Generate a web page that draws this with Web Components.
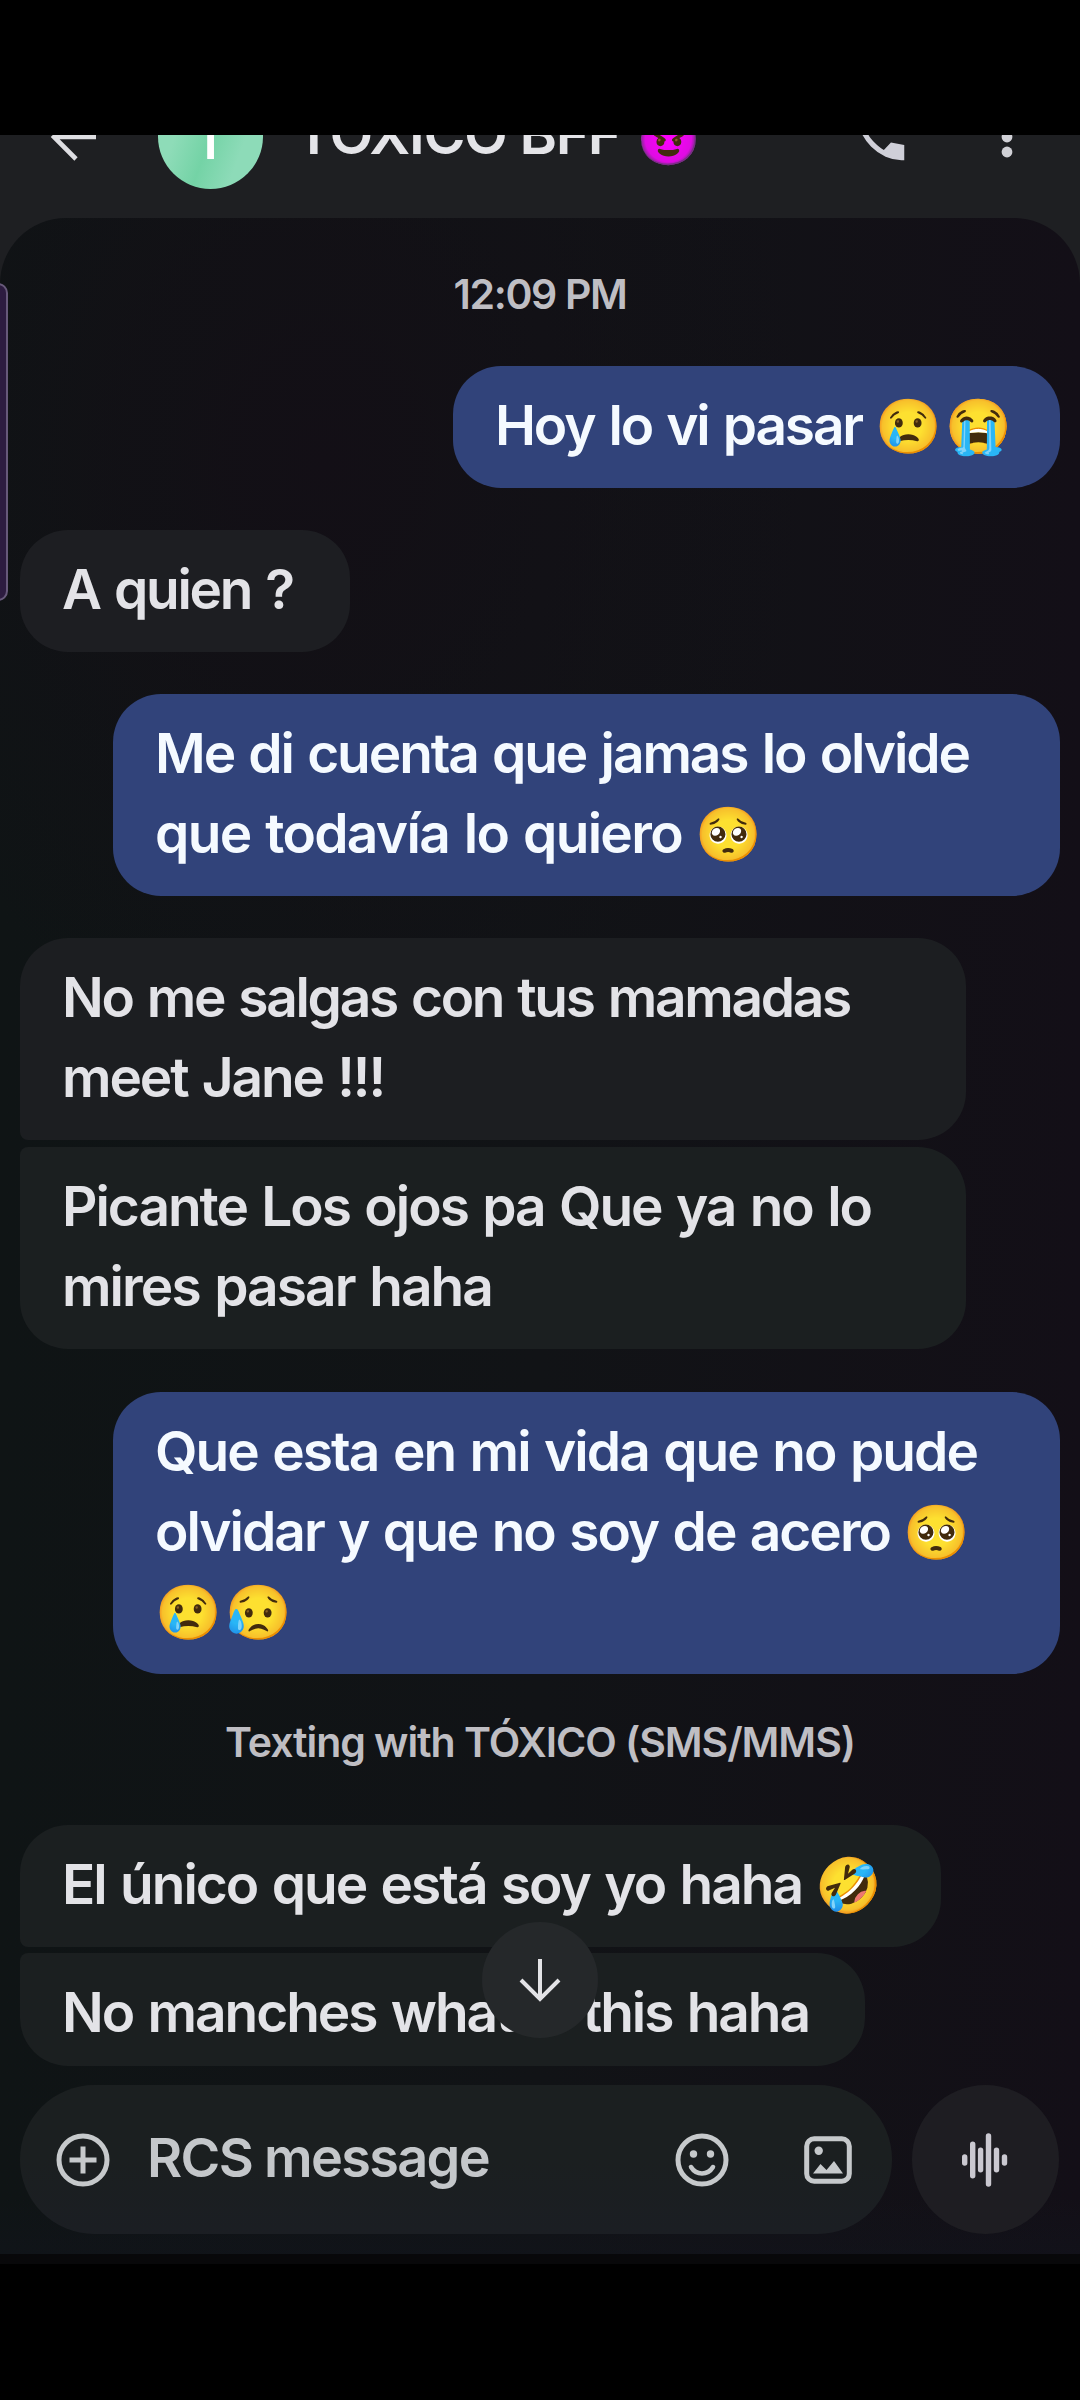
<!DOCTYPE html>
<html lang="es">
<head>
<meta charset="utf-8">
<title>Chat</title>
<style>
html,body{margin:0;background:#000}
body{width:1080px;height:2400px;overflow:hidden;font-family:Inter,"Liberation Sans",sans-serif}
</style>
</head>
<body>
<chat-screen>
  <chat-header slot="header"></chat-header>
  <chat-label style="margin-bottom:42px"><fit-text w="173">12:09 PM</fit-text></chat-label>
  <chat-bubble from="me" style="width:607px;margin-bottom:42px">
    <text-line><fit-text w="367">Hoy lo vi pasar</fit-text><emoji-run>😢😭</emoji-run></text-line>
  </chat-bubble>
  <chat-bubble style="width:330px;margin-bottom:42px">
    <text-line><fit-text w="231">A quien ?</fit-text></text-line>
  </chat-bubble>
  <chat-bubble from="me" style="width:947px;margin-bottom:42px">
    <text-line><fit-text w="814">Me di cuenta que jamas lo olvide</fit-text></text-line>
    <text-line><fit-text w="527">que todavía lo quiero</fit-text><emoji-run>🥺</emoji-run></text-line>
  </chat-bubble>
  <chat-bubble group="first" style="width:946px;margin-bottom:7px;--fill:#1c1e21">
    <text-line><fit-text w="788">No me salgas con tus mamadas</fit-text></text-line>
    <text-line><fit-text w="322">meet Jane !!!</fit-text></text-line>
  </chat-bubble>
  <chat-bubble group="last" style="width:946px;margin-bottom:43px;--fill:#1b1f20">
    <text-line><fit-text w="809">Picante Los ojos pa Que ya no lo</fit-text></text-line>
    <text-line><fit-text w="430">mires pasar haha</fit-text></text-line>
  </chat-bubble>
  <chat-bubble from="me" style="width:947px;margin-bottom:38px">
    <text-line><fit-text w="822">Que esta en mi vida que no pude</fit-text></text-line>
    <text-line><fit-text w="735">olvidar y que no soy de acero</fit-text><emoji-run>🥺</emoji-run></text-line>
    <text-line><emoji-run flush>😢😥</emoji-run></text-line>
  </chat-bubble>
  <chat-label style="margin-bottom:53px"><fit-text w="630">Texting with TÓXICO (SMS/MMS)</fit-text></chat-label>
  <chat-bubble group="first" style="width:921px;margin-bottom:6px;--fill:#1b1f20">
    <text-line><fit-text w="740">El único que está soy yo haha</fit-text><emoji-run>🤣</emoji-run></text-line>
  </chat-bubble>
  <chat-bubble group="last" style="width:845px;--end:14px;--fill:#1b1f20">
    <text-line><fit-text w="747">No manches what is this haha</fit-text></text-line>
  </chat-bubble>
  <scroll-button slot="overlay"></scroll-button>
  <message-composer slot="footer"></message-composer>
</chat-screen>

<script>
const define = (name, html, init) => {
  const t = document.createElement('template');
  t.innerHTML = html.trim();
  customElements.define(name, class extends HTMLElement {
    connectedCallback() {
      if (this.shadowRoot) return;
      this.attachShadow({ mode: 'open' }).append(t.content.cloneNode(true));
      if (init) init(this);
    }
  });
};

define('emoji-run', `
<style>
:host{display:block;flex:none;margin-left:13px;font:400 53.5px/40px "Noto Color Emoji",sans-serif;letter-spacing:3.8px;white-space:pre}
:host([flush]){margin-left:0}
</style><slot></slot>`);

define('text-line', `
<style>
:host{display:flex;align-items:baseline;height:80px;line-height:80px}
:host::before{content:"\\200b";width:0}
</style><slot></slot>`);

define('chat-bubble', `
<style>
:host{display:flex;flex-direction:column;box-sizing:border-box;flex:none;align-self:flex-start;
  padding:19px 0 var(--end,23px) 42px;border-radius:48px;background:var(--fill,#1d1e22);
  color:#e3e3e7;font-size:55px;font-weight:600;word-spacing:2.5px}
:host([from=me]){align-self:flex-end;background:#31437a;color:#f5faff}
:host([group=first]){border-bottom-left-radius:8px}
:host([group=last]){border-top-left-radius:8px}
</style><slot></slot>`);

define('chat-label', `
<style>
:host{display:block;flex:none;align-self:center;height:60px;line-height:60px;font-size:41px;font-weight:600;color:#bfbec3}
</style><slot></slot>`);

define('chat-header', `
<style>
:host{display:block;height:83px;overflow:hidden;flex:none}
.row{display:flex;align-items:center;height:105px;margin-top:-51px;padding:0 51px 0 46px}
.back{width:54px;height:54px;flex:none}
.avatar{width:105px;height:105px;border-radius:50%;background:linear-gradient(110deg,#8edcb8 0 25%,#74d3a6 50%,#8ddbb8 75%);
  margin-left:58px;display:flex;align-items:center;justify-content:center;color:#fff;font-size:60px;font-weight:500;line-height:60px}
.title{display:flex;align-items:center;margin-left:32px;color:#e4e4e8;font-size:57px;font-weight:600;line-height:70px;padding-bottom:6px}
.imp{font:57px/70px "Noto Color Emoji";margin-left:13px;width:72px;white-space:pre}
.call{width:62px;height:62px;margin-left:auto;flex:none}
.more{width:18px;height:60px;margin-left:86px;margin-right:13px;flex:none}
</style>
<div class="row">
<svg class="back" viewBox="0 0 54 54" fill="none" stroke="#dedee2" stroke-width="4.6"><path d="M50 27H8M30 5 8 27l22 22"/></svg>
<div class="avatar">T</div>
<div class="title"><fit-text w="325">TÓXICO BFF</fit-text></div><span class="imp">😈</span>
<svg class="call" viewBox="0 0 24 24" fill="#cfcfd8"><path d="M19.95 21q-3.125 0-6.175-1.362t-5.55-3.863-3.862-5.55T3 4.05V3H8.9L10 8L6.975 10.9q.5.925 1.187 1.787t1.513 1.663q.775.775 1.625 1.438T13.1 17l2.75-2.9L21 15.100V21z"/></svg>
<svg class="more" viewBox="0 0 18 60" fill="#d0d0d6"><circle cx="9" cy="15" r="5.4"/><circle cx="9" cy="30" r="5.4"/><circle cx="9" cy="45" r="5.4"/></svg>
</div>`);

define('scroll-button', `
<style>
:host{display:flex;align-items:center;justify-content:center;width:116px;height:116px;border-radius:50%;background:#25282a}
svg{width:48px;height:48px}
</style>
<svg viewBox="0 0 48 48" fill="none" stroke="#e3e3e6" stroke-width="4"><path d="M24 3v39M5 24l19 19 19-19"/></svg>`);

define('message-composer', `
<style>
:host{display:flex;gap:20px;padding:19px 20px 20px;flex:none;background:linear-gradient(#0000 70%,#11141c80)}
.pill{display:flex;align-items:center;box-sizing:border-box;width:872px;height:149px;border-radius:75px;background:linear-gradient(#1b1f20 50%,#1b1e23);padding:0 34px}
.hint{color:#c4c7ca;font-size:54px;font-weight:600;line-height:70px;margin:0 auto 4px 33px}
svg{width:60px;height:60px;flex:none;fill:none;stroke:#c6c9cb;stroke-width:5}
.emoji{margin-right:66px}
.voice{display:flex;align-items:center;justify-content:center;width:147px;height:149px;border-radius:50%;background:#1e1d22}
.voice svg{stroke:#cac8d0;stroke-width:5.4;stroke-linecap:round}
.f{fill:#c6c9cb;stroke:none}
</style>
<div class="pill">
<svg viewBox="0 0 60 60"><circle cx="29" cy="30" r="24"/><path d="M29 16.500v27M15.500 30h27"/></svg>
<fit-text class="hint" w="342">RCS message</fit-text>
<svg class="emoji" viewBox="0 0 60 60"><circle cx="30" cy="30" r="24"/><path d="M19 37q4 6.500 11 6.500T41 37" stroke-linecap="round" stroke-width="4.500"/><g class="f"><circle cx="21.500" cy="24" r="3.700"/><circle cx="38.500" cy="24" r="3.700"/></g></svg>
<svg class="pic" viewBox="0 0 60 60"><rect x="8.700" y="8.700" width="42.600" height="42.600" rx="7.500"/><g class="f"><circle cx="20.700" cy="20.700" r="4.200"/><path d="M15 43.500 22.500 34l6 6L36 31l9 12.500z"/></g></svg>
</div>
<div class="voice"><svg viewBox="0 0 60 60"><path d="M8.700 27v6M16.700 14.300v31.400M24.600 20.300v19.400M32.500 6v48M40.500 20.300v19.400M48.500 27v6"/></svg></div>`);

define('chat-screen', `
<style>
:host{display:flex;flex-direction:column;width:1080px;height:2400px;background:#000;position:relative}
.bar{height:135px;flex:none;background:#000}
.app{display:flex;flex-direction:column;height:2119px;flex:none;background:#1e1f22}
.body{display:flex;flex-direction:column;flex:1;border-radius:66px 66px 0 0;
  background:radial-gradient(ellipse 45% 30% at 30% 12%,#130f16,#130f1600),linear-gradient(90deg,#0f1415,#111316 50%,#130f17)}
.log{display:flex;flex-direction:column;box-sizing:border-box;height:1848px;padding:46px 20px 0;flex:none}
.edge{height:10px;background:#08080a}
.sliver{position:absolute;left:-14px;top:283px;width:18px;height:314px;border:2px solid #67597a;border-radius:10px;background:#2d1c40}
.over{position:absolute;left:482px;top:1922px}
</style>
<div class="bar"></div>
<div class="app">
<slot name="header"></slot>
<div class="body"><div class="log"><slot></slot></div><slot name="footer"></slot></div>
</div>
<div class="edge"></div>
<div class="sliver"></div>
<div class="over"><slot name="overlay"></slot></div>`);

/* Tracks its text so that it fills the width given in "w". Registered last, once every host has its font size. */
define('fit-text', `
<style>:host{display:inline-block;white-space:pre;flex:none}</style><slot></slot>`, el => {
  const natural = el.getBoundingClientRect().width;
  el.style.letterSpacing = ((el.getAttribute('w') - natural) / el.textContent.length).toFixed(3) + 'px';
});
</script>
</body>
</html>
